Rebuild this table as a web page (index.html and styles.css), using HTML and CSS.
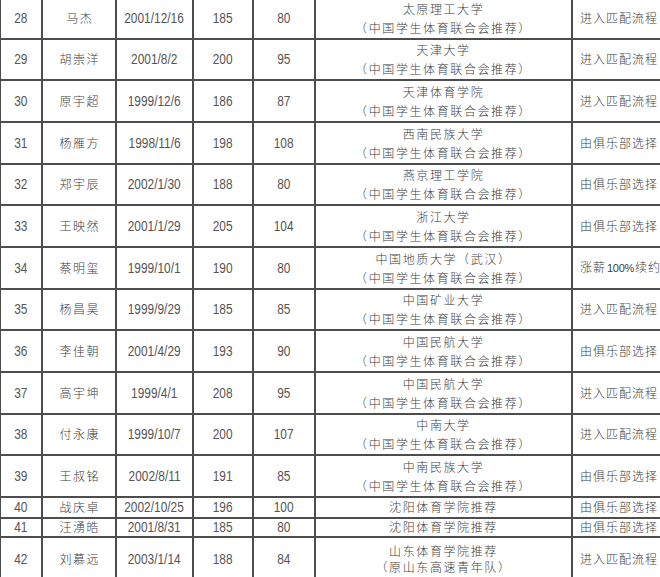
FILE: index.html
```html
<!DOCTYPE html>
<html lang="zh">
<head>
<meta charset="utf-8">
<title>名单</title>
<link rel="stylesheet" href="styles.css">
</head>
<body>
<table class="roster">
  <colgroup>
    <col class="c-no"><col class="c-name"><col class="c-date"><col class="c-h"><col class="c-w"><col class="c-school"><col class="c-res">
  </colgroup>
  <tbody>
    <tr class="two"><td class="num"><span>28</span></td><td class="name">马杰</td><td class="num"><span>2001/12/16</span></td><td class="num"><span>185</span></td><td class="num"><span>80</span></td><td class="school">太原理工大学<br>（中国学生体育联合会推荐）</td><td class="res">进入匹配流程</td></tr>
    <tr class="two"><td class="num"><span>29</span></td><td class="name">胡崇洋</td><td class="num"><span>2001/8/2</span></td><td class="num"><span>200</span></td><td class="num"><span>95</span></td><td class="school">天津大学<br>（中国学生体育联合会推荐）</td><td class="res">进入匹配流程</td></tr>
    <tr class="two"><td class="num"><span>30</span></td><td class="name">原宇超</td><td class="num"><span>1999/12/6</span></td><td class="num"><span>186</span></td><td class="num"><span>87</span></td><td class="school">天津体育学院<br>（中国学生体育联合会推荐）</td><td class="res">进入匹配流程</td></tr>
    <tr class="two"><td class="num"><span>31</span></td><td class="name">杨雁方</td><td class="num"><span>1998/11/6</span></td><td class="num"><span>198</span></td><td class="num"><span>108</span></td><td class="school">西南民族大学<br>（中国学生体育联合会推荐）</td><td class="res">由俱乐部选择</td></tr>
    <tr class="two"><td class="num"><span>32</span></td><td class="name">郑宇辰</td><td class="num"><span>2002/1/30</span></td><td class="num"><span>188</span></td><td class="num"><span>80</span></td><td class="school">燕京理工学院<br>（中国学生体育联合会推荐）</td><td class="res">由俱乐部选择</td></tr>
    <tr class="two"><td class="num"><span>33</span></td><td class="name">王映然</td><td class="num"><span>2001/1/29</span></td><td class="num"><span>205</span></td><td class="num"><span>104</span></td><td class="school">浙江大学<br>（中国学生体育联合会推荐）</td><td class="res">由俱乐部选择</td></tr>
    <tr class="two"><td class="num"><span>34</span></td><td class="name">蔡明玺</td><td class="num"><span>1999/10/1</span></td><td class="num"><span>190</span></td><td class="num"><span>80</span></td><td class="school">中国地质大学（武汉）<br>（中国学生体育联合会推荐）</td><td class="res">涨薪<span class="pct">100%</span>续约</td></tr>
    <tr class="two"><td class="num"><span>35</span></td><td class="name">杨昌昊</td><td class="num"><span>1999/9/29</span></td><td class="num"><span>185</span></td><td class="num"><span>85</span></td><td class="school">中国矿业大学<br>（中国学生体育联合会推荐）</td><td class="res">进入匹配流程</td></tr>
    <tr class="two"><td class="num"><span>36</span></td><td class="name">李佳朝</td><td class="num"><span>2001/4/29</span></td><td class="num"><span>193</span></td><td class="num"><span>90</span></td><td class="school">中国民航大学<br>（中国学生体育联合会推荐）</td><td class="res">由俱乐部选择</td></tr>
    <tr class="two"><td class="num"><span>37</span></td><td class="name">高宇坤</td><td class="num"><span>1999/4/1</span></td><td class="num"><span>208</span></td><td class="num"><span>95</span></td><td class="school">中国民航大学<br>（中国学生体育联合会推荐）</td><td class="res">进入匹配流程</td></tr>
    <tr class="two"><td class="num"><span>38</span></td><td class="name">付永康</td><td class="num"><span>1999/10/7</span></td><td class="num"><span>200</span></td><td class="num"><span>107</span></td><td class="school">中南大学<br>（中国学生体育联合会推荐）</td><td class="res">进入匹配流程</td></tr>
    <tr class="two"><td class="num"><span>39</span></td><td class="name">王叔铭</td><td class="num"><span>2002/8/11</span></td><td class="num"><span>191</span></td><td class="num"><span>85</span></td><td class="school">中南民族大学<br>（中国学生体育联合会推荐）</td><td class="res">由俱乐部选择</td></tr>
    <tr class="one-a"><td class="num"><span>40</span></td><td class="name">战庆卓</td><td class="num"><span>2002/10/25</span></td><td class="num"><span>196</span></td><td class="num"><span>100</span></td><td class="school">沈阳体育学院推荐</td><td class="res">由俱乐部选择</td></tr>
    <tr class="one-b"><td class="num"><span>41</span></td><td class="name">汪湧皓</td><td class="num"><span>2001/8/31</span></td><td class="num"><span>185</span></td><td class="num"><span>80</span></td><td class="school">沈阳体育学院推荐</td><td class="res">由俱乐部选择</td></tr>
    <tr class="last"><td class="num"><span>42</span></td><td class="name">刘慕远</td><td class="num"><span>2003/1/14</span></td><td class="num"><span>188</span></td><td class="num"><span>84</span></td><td class="school">山东体育学院推荐<br>（原山东高速青年队）</td><td class="res">进入匹配流程</td></tr>
  </tbody>
</table>
</body>
</html>
```
FILE: styles.css
```css
html, body {
  margin: 0;
  padding: 0;
  background: #ffffff;
  overflow: hidden;
}
body {
  width: 660px;
  height: 577px;
}
.roster {
  border-collapse: collapse;
  table-layout: fixed;
  width: 720px;
  margin-top: -4px;
  margin-left: -1px;
}
.c-no { width: 42px; }
.c-name { width: 74px; }
.c-date { width: 77px; }
.c-h { width: 60px; }
.c-w { width: 62px; }
.c-school { width: 257px; }
.c-res { width: 148px; }
.roster td {
  border: 2px solid #4d4d4d;
  padding: 0;
  text-align: center;
  vertical-align: middle;
  overflow: hidden;
  white-space: nowrap;
  line-height: 16px;
}
.roster tr.two td { height: 39.67px; }
.roster tr.one-a td { height: 19px; }
.roster tr.one-b td { height: 17px; }
.roster tr.last td { height: 42px; }
.roster td.num {
  font-family: "Liberation Sans", Arial, sans-serif;
  font-size: 14px;
  color: #555555;
}
.num span {
  display: inline-block;
  transform: scaleX(0.85);
}
.roster td.name,
.roster td.school,
.roster td.res {
  font-family: "Noto Sans CJK SC", sans-serif;
  font-weight: 300;
  font-size: 12px;
  color: #404040;
}
.roster td.name {
  letter-spacing: 1.5px;
  text-indent: 1.5px;
}
.roster td.school {
  letter-spacing: 1.6px;
}
.roster tr.two td.school {
  line-height: 19px;
}
.roster tr.last td.school {
  line-height: 16px;
}
.roster td.res {
  text-align: left;
  padding-left: 7px;
  letter-spacing: 1px;
}
.pct {
  font-family: "Liberation Sans", Arial, sans-serif;
  font-size: 11px;
  letter-spacing: -0.3px;
  padding: 0 1px;
}
```
